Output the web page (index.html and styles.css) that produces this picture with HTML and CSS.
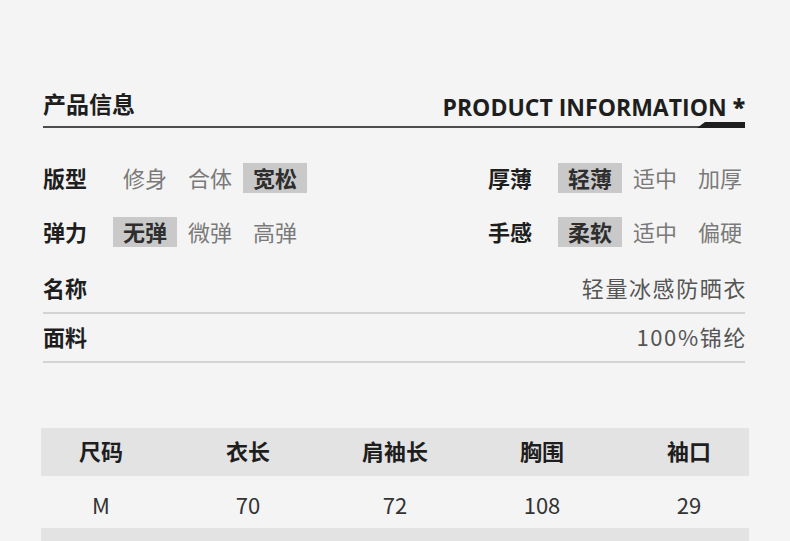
FILE: index.html
```html
<!DOCTYPE html>
<html lang="zh-CN">
<head>
<meta charset="utf-8">
<title>产品信息</title>
<link rel="stylesheet" href="styles.css">
</head>
<body>
<div class="page">
  <div class="head">
    <div class="head-cn">产品信息</div>
    <div class="head-en">PRODUCT INFORMATION <span class="star">*</span></div>
  </div>

  <div class="attrs">
    <div class="attr">
      <div class="attr-label">版型</div>
      <div class="opt">修身</div>
      <div class="opt">合体</div>
      <div class="opt on">宽松</div>
    </div>
    <div class="attr">
      <div class="attr-label">厚薄</div>
      <div class="opt on">轻薄</div>
      <div class="opt">适中</div>
      <div class="opt">加厚</div>
    </div>
    <div class="attr">
      <div class="attr-label">弹力</div>
      <div class="opt on">无弹</div>
      <div class="opt">微弹</div>
      <div class="opt">高弹</div>
    </div>
    <div class="attr">
      <div class="attr-label">手感</div>
      <div class="opt on">柔软</div>
      <div class="opt">适中</div>
      <div class="opt">偏硬</div>
    </div>
  </div>

  <div class="info">
    <div class="info-row">
      <div class="info-label">名称</div>
      <div class="info-value">轻量冰感防晒衣</div>
    </div>
    <div class="info-row">
      <div class="info-label">面料</div>
      <div class="info-value">100%锦纶</div>
    </div>
  </div>

  <div class="size-table">
    <div class="size-row size-head">
      <div>尺码</div><div>衣长</div><div>肩袖长</div><div>胸围</div><div>袖口</div>
    </div>
    <div class="size-row size-data">
      <div>M</div><div>70</div><div>72</div><div>108</div><div>29</div>
    </div>
    <div class="size-row size-alt"></div>
  </div>
</div>
</body>
</html>
```

FILE: styles.css
```css
* { box-sizing: border-box; }
html, body {
  margin: 0;
  padding: 0;
  background: #f4f4f4;
  height: 541px;
  overflow: hidden;
}
body {
  font-family: "Noto Sans CJK SC", "Noto Sans", sans-serif;
  color: #222;
}
.page {
  padding: 0 45px 0 43px;
}

/* heading */
.head {
  position: relative;
  display: flex;
  justify-content: space-between;
  align-items: flex-start;
  height: 128px;
  padding-top: 89px;
  border-bottom: 2px solid #4d4d4d;
}
.head-cn {
  font-size: 23px;
  font-weight: 700;
  line-height: 28px;
  color: #1e1e1e;
}
.head-en {
  margin-top: 4px;
  font-family: "Open Sans", "Noto Sans", sans-serif;
  font-size: 23px;
  font-weight: 700;
  line-height: 28px;
  color: #1e1e1e;
  letter-spacing: 0;
}
.star { font-weight: 800; }
.head::after {
  content: "";
  position: absolute;
  right: 0;
  bottom: -2px;
  width: 48px;
  height: 6px;
  background: #1e1e1e;
  clip-path: polygon(8px 0, 100% 0, 100% 100%, 0 100%);
}

/* attributes */
.attrs {
  display: grid;
  grid-template-columns: 445px 1fr;
  row-gap: 24px;
  padding-top: 35px;
}
.attr {
  display: flex;
  align-items: center;
  gap: 1px;
  height: 30px;
}
.attr-label {
  width: 69px;
  font-size: 22px;
  font-weight: 700;
  color: #1e1e1e;
  line-height: 28px;
  padding-bottom: 2px;
}
.opt {
  width: 64px;
  height: 30px;
  line-height: 28px;
  text-align: center;
  font-size: 22px;
  color: #7a7a7a;
}
.opt.on {
  background: #c9c9c9;
  color: #2e2e2e;
  font-weight: 700;
}

/* name / fabric */
.info {
  margin-top: 18px;
}
.info-row {
  display: flex;
  justify-content: space-between;
  align-items: center;
  height: 49px;
  padding-bottom: 3px;
  border-bottom: 2px solid #d3d3d3;
}
.info-label {
  font-size: 22px;
  font-weight: 700;
  color: #1e1e1e;
}
.info-value {
  font-size: 22px;
  color: #555;
  letter-spacing: 1.6px;
  margin-right: -2px;
}

/* size table */
.size-table {
  margin: 65px -4px 0 -2px;
}
.size-row {
  display: grid;
  grid-template-columns: repeat(5, 147px);
  justify-content: center;
  align-items: center;
  height: 52px;
  font-size: 22px;
  color: #333;
  text-align: center;
}
.size-head {
  height: 48px;
  padding-bottom: 5px;
  background: #e3e3e3;
  font-weight: 700;
  color: #1e1e1e;
}
.size-data {
  padding-top: 3px;
}
.size-alt {
  height: 13px;
  background: #e3e3e3;
}
```
